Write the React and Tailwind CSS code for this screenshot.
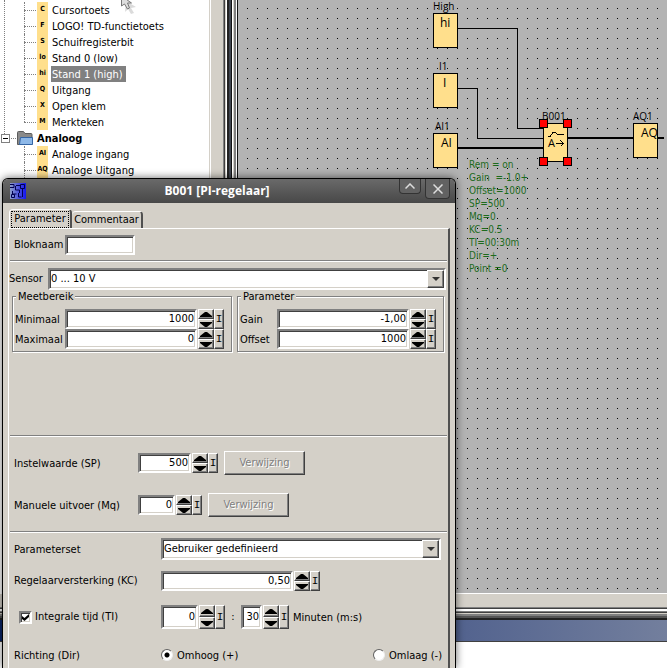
import { useState } from 'react';

const treeItems = [
  { tag: 'C', name: 'Cursortoets' },
  { tag: 'F', name: 'LOGO! TD-functietoets' },
  { tag: 'S', name: 'Schuifregisterbit' },
  { tag: 'lo', name: 'Stand 0 (low)' },
  { tag: 'hi', name: 'Stand 1 (high)' },
  { tag: 'Q', name: 'Uitgang' },
  { tag: 'X', name: 'Open klem' },
  { tag: 'M', name: 'Merkteken' },
];

const analogItems = [
  { tag: 'AI', name: 'Analoge ingang' },
  { tag: 'AQ', name: 'Analoge Uitgang' },
];

const blockInfo = [
  'Rem = on',
  'Gain \u00a0=-1.0+',
  'Offset=1000',
  'SP=500',
  'Mq=0',
  'KC=0.5',
  'TI=00:30m',
  'Dir=+',
  'Point =0',
];

// Positions on the drawing canvas
const nodes = [
  { label: 'High', lx: 195, text: 'hi', tx: 202, x: 195, y: 13, h: 34 },
  { label: 'I1', lx: 201, text: 'I', tx: 205, x: 195, y: 73, h: 34 },
  { label: 'AI1', lx: 197, text: 'AI', tx: 203, x: 195, y: 133, h: 34 },
  { label: 'B001', lx: 304, text: '', tx: 0, x: 305, y: 123, h: 38 },
  { label: 'AQ1', lx: 395, text: 'AQ', tx: 403, x: 395, y: 123, h: 34 },
];

const handles = [
  [301, 119],
  [325, 119],
  [301, 157],
  [325, 157],
];

const sunken = 'border-2 border-t-[#808080] border-l-[#808080] border-b-white border-r-white shadow-[inset_1px_1px_0_#404040,inset_-1px_-1px_0_#d4d0c8] bg-white';
const raised = 'border border-t-white border-l-white border-b-[#404040] border-r-[#404040] shadow-[inset_-1px_-1px_0_#808080] bg-[#d4d0c8]';

function TreeRow({ item, selected, onSelect, last }) {
  return (
    <li className="relative h-4 flex items-center pl-[37px]">
      <span className={`absolute left-6 top-0 border-l border-dotted border-[#808080] ${last ? 'h-2' : 'h-4'}`} />
      <span className="absolute left-6 top-2 w-3 border-t border-dotted border-[#808080]" />
      <span className="w-[11px] h-4 bg-[#ffdf8c] text-[7px] leading-[14px] font-bold text-center flex justify-center">
        {item.tag}
      </span>
      <button
        onClick={onSelect}
        className={`ml-[3px] h-4 pt-px pl-px pr-[3px] leading-4 text-left ${selected ? 'bg-[#808080] text-white' : ''}`}
      >
        {item.name}
      </button>
    </li>
  );
}

function Tree() {
  const [selected, setSelected] = useState('Stand 1 (high)');
  return (
    <nav className="relative w-[209px] shrink-0 bg-white pt-[2px] whitespace-nowrap overflow-hidden">
      <span className="absolute left-1 top-0 h-[134px] border-l border-dotted border-[#808080]" />
      <ul>
        {treeItems.map((item, i) => (
          <TreeRow
            key={item.name}
            item={item}
            selected={selected === item.name}
            onSelect={() => setSelected(item.name)}
            last={i === treeItems.length - 1}
          />
        ))}
      </ul>
      <div className="h-4 flex items-center pl-px font-bold">
        <svg width="36" height="16" viewBox="0 0 36 16" className="shrink-0">
          <rect x="0.5" y="4.5" width="8" height="8" fill="#fff" stroke="#808080" />
          <path d="M2 8.5h5" stroke="#000" />
          <path d="M10 8.5h6" stroke="#808080" strokeDasharray="1 1" />
          <path d="M16.5 14.5V2.5q0-1 1-1h5l1.5 2h6q1 0 1 1v10z" fill="#8a8a8a" stroke="#5c5c5c" />
          <path d="M19.5 7.5h12v7h-13z" fill="#8db8e8" stroke="#3465a4" />
        </svg>
        <span className="leading-4 pt-px">Analoog</span>
      </div>
      <ul>
        {analogItems.map((item) => (
          <TreeRow
            key={item.name}
            item={item}
            selected={selected === item.name}
            onSelect={() => setSelected(item.name)}
          />
        ))}
      </ul>
    </nav>
  );
}

function Canvas() {
  return (
    <svg className="flex-1 min-w-0 h-full bg-[#b3b3b3]" shapeRendering="crispEdges">
      <defs>
        <pattern id="dots" width="10" height="10" patternUnits="userSpaceOnUse">
          <rect x="9" y="8" width="1" height="1" fill="#000" />
        </pattern>
      </defs>
      <rect width="100%" height="100%" fill="url(#dots)" />
      <g fill="none" stroke="#000">
        <path d="M219 28.5H279.5V128.5H305" />
        <path d="M219 88.5H239.5V138.5H305" />
        <path d="M218 148H305M329 138H395M419 138H426" strokeWidth="2" />
      </g>
      <g className="font-['Open_Sans',sans-serif]">
        {nodes.map((n) => (
          <g key={n.label}>
            <rect x={n.x + 0.5} y={n.y + 0.5} width="24" height={n.h} fill="#ffdf8c" stroke="#000" />
            <text x={n.lx} y={n.y - 3} fontSize="10">{n.label}</text>
            {n.text && <text x={n.tx} y={n.y + 14} fontSize="12">{n.text}</text>}
          </g>
        ))}
        <text x="310" y="147" fontSize="11">A</text>
      </g>
      <path d="M310 136.5h2l3-4h2l3 2h6" fill="none" stroke="#000" />
      <path d="M318 143.5h7M322.5 140.5l3 3l-3 3" fill="none" stroke="#000" />
      {handles.map(([x, y]) => (
        <rect key={`${x}-${y}`} x={x + 0.5} y={y + 0.5} width="8" height="8" fill="#f00" stroke="#000" />
      ))}
      <g fill="#1c6b1c" fontSize="10">
        {blockInfo.map((line, i) => (
          <text key={line} x="231" y={168 + i * 13}>{line}</text>
        ))}
      </g>
    </svg>
  );
}

function Spinner({ id, label, value, width, tall }) {
  const [text, setText] = useState(value);
  return (
    <div className={`flex ${tall ? 'h-6' : 'h-5'}`}>
      <input
        id={id}
        aria-label={label}
        value={text}
        onChange={(e) => setText(e.target.value)}
        className={`${sunken} ${width} text-right pt-px pr-px outline-none`}
      />
      <div className="ml-px w-4 flex flex-col">
        <button aria-label="Omhoog" className={`${raised} flex-1 min-h-0 flex items-center justify-center`}>
          <svg width="12" height="5" viewBox="0 0 12 5" className="shrink-0"><path d="M5 0h2l5 4v1H0V4z" /></svg>
        </button>
        <button aria-label="Omlaag" className={`${raised} flex-1 min-h-0 flex items-center justify-center`}>
          <svg width="12" height="5" viewBox="0 0 12 5" className="shrink-0"><path d="M0 0h12v1L7 5H5L0 1z" /></svg>
        </button>
      </div>
      <button className={`${raised} w-[10px] flex items-center justify-center font-['Liberation_Mono',monospace]`}>I</button>
    </div>
  );
}

function Select({ id, value, className }) {
  return (
    <div className={`relative h-[22px] ${className}`}>
      <select id={id} className={`${sunken} appearance-none w-full h-full pl-px outline-none`}>
        <option>{value}</option>
      </select>
      <span className={`${raised} absolute right-[2px] top-[2px] bottom-[2px] w-[17px] flex items-center justify-center pointer-events-none`}>
        <svg width="8" height="4" viewBox="0 0 8 4"><path d="M0 0h8L4 4z" fill="#333" /></svg>
      </span>
    </div>
  );
}

function Separator() {
  return <hr className="mx-px h-[2px] border-0 border-t border-t-[#808080] bg-white" />;
}

function Group({ title, className, children }) {
  return (
    <fieldset className={`relative h-14 border border-[#808080] shadow-[1px_1px_0_#fff,inset_1px_1px_0_#fff] ${className}`}>
      <legend className="absolute left-[3px] -top-1.5 h-3 leading-3 px-[2px] bg-[#d4d0c8]">{title}</legend>
      <div className="pt-3 pl-[2px]">{children}</div>
    </fieldset>
  );
}

function Field({ id, label, value, labelWidth }) {
  return (
    <div className="flex items-center h-5">
      <label htmlFor={id} className={`pt-0.5 ${labelWidth}`}>{label}</label>
      <Spinner id={id} value={value} width="w-[132px]" />
    </div>
  );
}

function RefButton() {
  return (
    <button disabled className={`${raised} ml-[6px] w-[81px] h-6 text-[#808080] [text-shadow:1px_1px_0_#fff]`}>
      Verwijzing
    </button>
  );
}

function Radio({ label, checked, onChange }) {
  return (
    <label className="flex items-center gap-1">
      <input
        type="radio"
        name="dir"
        checked={checked}
        onChange={onChange}
        className="appearance-none size-3 rounded-full bg-white border border-t-[#606060] border-l-[#606060] border-b-[#eee] border-r-[#eee] checked:bg-[radial-gradient(circle,#000_2px,#fff_3px)]"
      />
      <span className="pt-0.5">{label}</span>
    </label>
  );
}

function Dialog() {
  const [integral, setIntegral] = useState(true);
  const [dir, setDir] = useState('up');

  return (
    <section
      role="dialog"
      aria-labelledby="dialog-title"
      className="absolute left-[2px] top-[178px] bottom-0 w-[454px] flex flex-col overflow-hidden rounded-t-md border border-b-0 border-black bg-[#d4d0c8] shadow-[0_0_8px_rgba(0,0,0,0.6)]"
    >
      {/* Title bar */}
      <header className="relative h-6 shrink-0 flex items-center justify-center pr-6 bg-linear-to-b from-[#6a6a6a] to-[#484848] text-white">
        <svg width="16" height="16" viewBox="0 0 16 16" className="absolute left-[7px] top-1">
          <defs>
            <linearGradient id="logo">
              <stop offset="0" stopColor="#8c9cc8" />
              <stop offset="1" stopColor="#1414f0" />
            </linearGradient>
          </defs>
          <rect width="16" height="16" fill="url(#logo)" />
          <path d="M0 1.5h4v3h-4M6 2.5h4M10.5 1.5h4v4h-4zM5.5 3v4h4v3M2.5 8v3h4M1.5 11.5h3v3h-3zM8.5 10v4h3M12.5 6v8" fill="none" stroke="#000050" />
        </svg>
        <h1 id="dialog-title" className="text-[12px] font-bold font-['Open_Sans',sans-serif]">B001 [PI-regelaar]</h1>
        <div className="absolute right-[5px] top-0 flex items-start gap-1">
          <button aria-label="Oprollen" className="w-[22px] h-[15px] flex items-center justify-center rounded-b border border-t-0 border-[#333] bg-[#626262]">
            <svg width="10" height="6" viewBox="0 0 10 6"><path d="M0.5 5.5L5 1l4.5 4.5" fill="none" stroke="#ddd" strokeWidth="1.5" /></svg>
          </button>
          <button aria-label="Sluiten" className="w-[25px] h-5 flex items-center justify-center rounded-b border border-t-0 border-[#333] bg-[#626262]">
            <svg width="10" height="10" viewBox="0 0 10 10"><path d="M0.5 0.5l9 9M9.5 0.5l-9 9" stroke="#ddd" strokeWidth="1.5" /></svg>
          </button>
        </div>
      </header>

      {/* Tabs */}
      <div role="tablist" className="h-[25px] shrink-0 pl-[6px] flex items-end">
        <button role="tab" aria-selected="true" className="w-[63px] h-[19px] rounded-t-sm border-t border-l border-r-2 border-t-white border-l-white border-r-[#505050] flex items-center justify-center">
          <span className="h-[17px] px-[2px] border border-dotted border-black leading-[14px]">Parameter</span>
        </button>
        <button role="tab" aria-selected="false" className="w-[71px] h-[17px] rounded-t-sm border-t border-r-2 border-t-white border-r-[#505050]">
          Commentaar
        </button>
      </div>

      <div className="flex-1 ml-[5px] mr-[5px] border-t border-l border-r-2 border-t-white border-l-white border-r-[#505050]">
        <div className="h-[31px] flex items-center pl-[5px]">
          <label htmlFor="bloknaam" className="w-[51px] pt-0.5">Bloknaam</label>
          <input id="bloknaam" className={`${sunken} w-[70px] h-5 outline-none`} />
        </div>
        <Separator />
        <div className="h-[34px] flex items-center">
          <label htmlFor="sensor" className="w-[39px]">Sensor</label>
          <Select id="sensor" value="0 ... 10 V" className="flex-1 mr-[2px]" />
        </div>
        <div className="flex gap-[5px]">
          <Group title="Meetbereik" className="ml-[3px] w-[220px]">
            <Field id="min" label="Minimaal" value="1000" labelWidth="w-[50px]" />
            <Field id="max" label="Maximaal" value="0" labelWidth="w-[50px]" />
          </Group>
          <Group title="Parameter" className="flex-1 mr-1">
            <Field id="gain" label="Gain" value="-1,00" labelWidth="w-[37px]" />
            <Field id="offset" label="Offset" value="1000" labelWidth="w-[37px]" />
          </Group>
        </div>

        <div className="mt-[83px]" />
        <Separator />
        <div className="pt-[5px] pb-[5px] pl-[5px]">
          <div className="h-[42px] flex items-center">
            <label htmlFor="sp" className="w-[124px] pt-0.5">Instelwaarde (SP)</label>
            <Spinner id="sp" value="500" width="w-[53px]" />
            <RefButton />
          </div>
          <div className="h-[42px] flex items-center">
            <label htmlFor="mq" className="w-[124px] pt-0.5">Manuele uitvoer (Mq)</label>
            <Spinner id="mq" value="0" width="w-[37px]" />
            <RefButton />
          </div>
        </div>
        <Separator />
        <div className="pl-[5px]">
          <div className="h-8 flex items-center">
            <label htmlFor="set" className="w-[147px] pt-0.5">Parameterset</label>
            <Select id="set" value="Gebruiker gedefinieerd" className="w-[280px]" />
          </div>
          <div className="h-8 flex items-center">
            <label htmlFor="kc" className="w-[147px]">Regelaarversterking (KC)</label>
            <Spinner id="kc" value="0,50" width="w-[132px]" />
          </div>
          <div className="h-10 flex items-center">
            <label className="w-[147px] pl-[5px] flex items-center gap-[3px]">
              <span className="relative flex">
                <input
                  type="checkbox"
                  checked={integral}
                  onChange={() => setIntegral(!integral)}
                  className={`${sunken} appearance-none size-[13px]`}
                />
                {integral && (
                  <svg width="7" height="7" viewBox="0 0 7 7" className="absolute left-[3px] top-[3px] pointer-events-none">
                    <path d="M0 2v3l2.5 2L7 3V0L2.5 4z" />
                  </svg>
                )}
              </span>
              Integrale tijd (TI)
            </label>
            <Spinner label="Minuten" value="0" width="w-[37px]" tall />
            <span className="w-4 text-center">:</span>
            <Spinner label="Seconden" value="30" width="w-[21px]" tall />
            <span className="ml-1 pt-0.5">Minuten (m:s)</span>
          </div>
          <div className="h-9 flex items-center">
            <span className="w-[147px] pt-0.5">Richting (Dir)</span>
            <div className="flex-1 flex justify-between pr-[6px]">
              <Radio label="Omhoog (+)" checked={dir === 'up'} onChange={() => setDir('up')} />
              <Radio label="Omlaag (-)" checked={dir === 'down'} onChange={() => setDir('down')} />
            </div>
          </div>
        </div>
      </div>
    </section>
  );
}

export default function App() {
  return (
    <div className="relative h-screen overflow-hidden flex flex-col bg-white text-black text-[11px] font-['DejaVu_Sans_Condensed','DejaVu_Sans',sans-serif]">
      <main className="flex-1 min-h-0 flex">
        <Tree />
        <div className="w-[14px] shrink-0 bg-[linear-gradient(to_right,#d4d0c8_1px,#fff_1px_2px,#d4d0c8_2px)]" />
        <div className="w-[15px] shrink-0 bg-[linear-gradient(to_right,#808080_1px,#404040_1px_2px,#d4d0c8_2px_3px,#fff_3px_4px,#222_4px_6px,#404650_6px_8px,#111_8px_9px,#fff_9px_10px,#d4d0c8_10px_11px,#808080_11px_13px,#fff_13px_14px,#111_14px)]" />
        <Canvas />
      </main>

      {/* Scroll bar track and splitter under the canvas */}
      <div className="h-[14px] shrink-0 bg-[#d4d0c8] border-t border-white" />
      <div className="h-[13px] shrink-0 bg-[linear-gradient(#808080_1px,#404040_1px_2px,#fff_2px_4px,#808080_4px_5px,#404040_5px_6px,#d4d0c8_6px_7px,#808080_7px_9px,#555_9px_11px,#222_11px)]" />
      <div className="h-[22px] shrink-0 border-b border-[#404040] bg-linear-to-r from-[#0a246a] via-[#54648f] via-70% to-[#737f9d]" />
      <div className="h-[26px] shrink-0 bg-white" />

      <svg width="16" height="14" viewBox="0 0 16 14" className="absolute left-[121px] top-0">
        <path d="M5 1l10 6l-5 1l3 5l-3 1l-3-5l-3 3z" fill="#888" opacity="0.3" />
        <path d="M0.5-4V6l3-2l3 5l2-1l-2-5h4z" fill="#ddd" stroke="#777" />
      </svg>
      <Dialog />
    </div>
  );
}
